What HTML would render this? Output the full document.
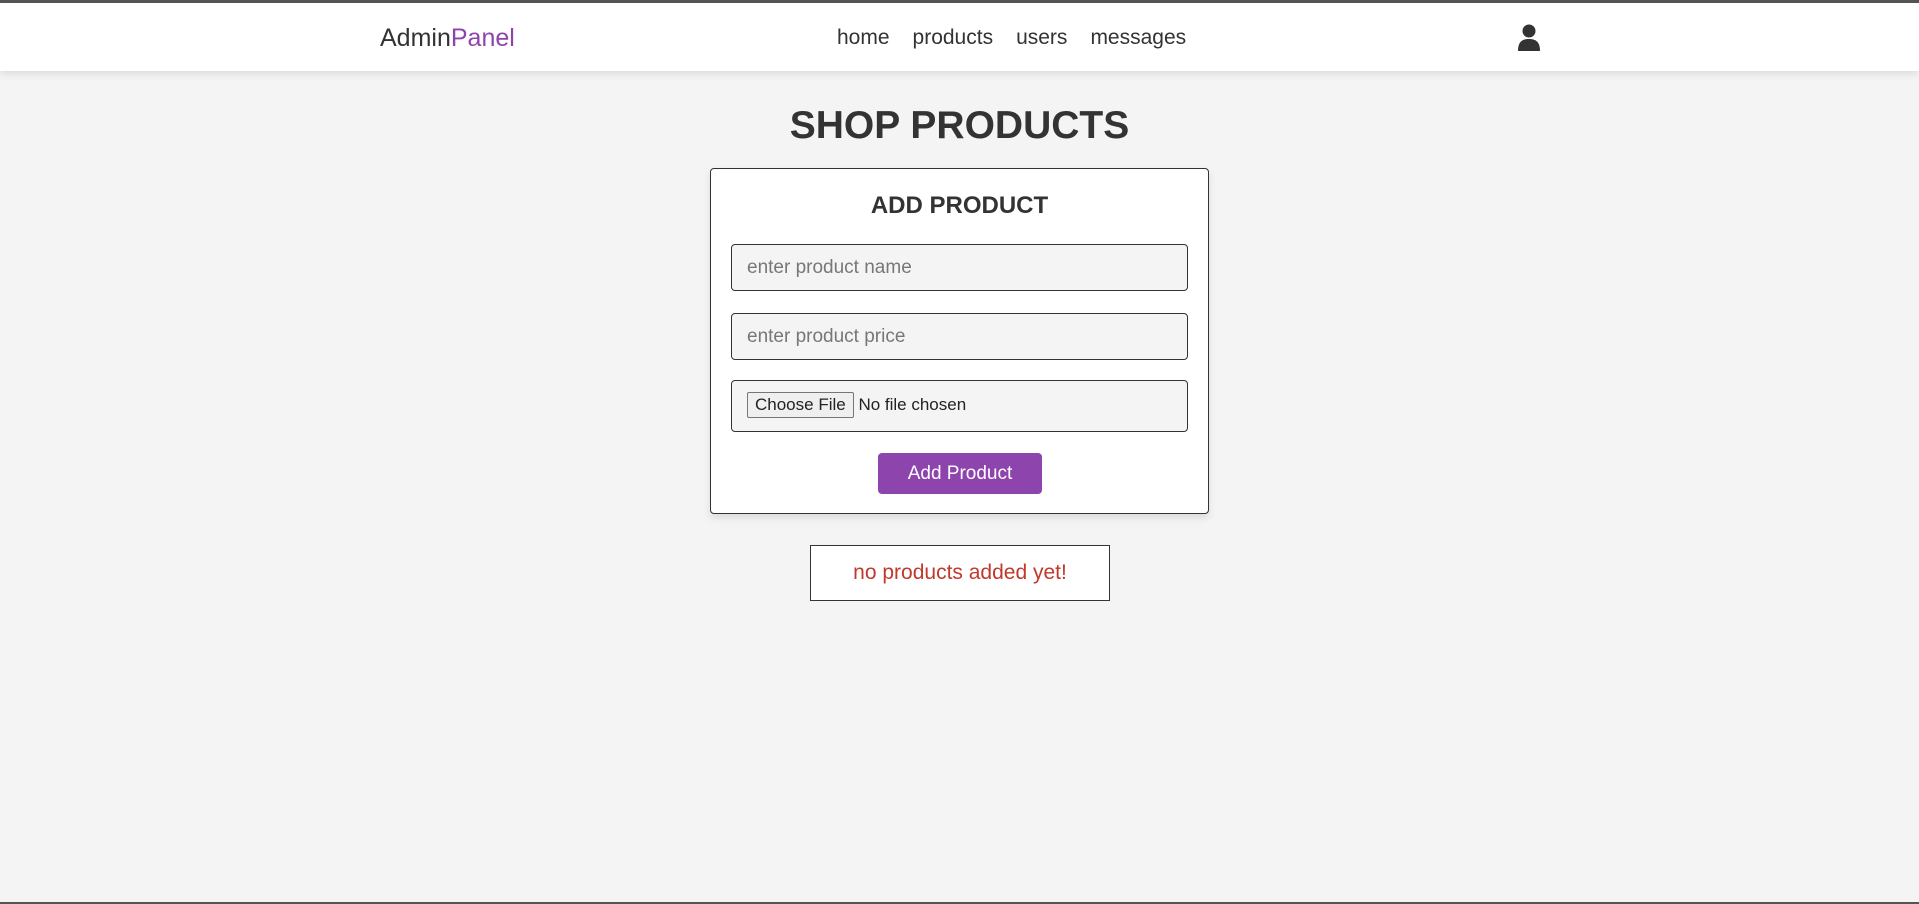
<!DOCTYPE html>
<html><head><meta charset="utf-8"><style>
*{margin:0;padding:0;box-sizing:border-box}
html,body{width:1919px;height:904px;overflow:hidden}
body{background:#f4f4f4;font-family:"Liberation Sans",sans-serif;color:#333;position:relative;border-top:3px solid #555;border-bottom:2px solid #555}
.hdr{position:absolute;top:0;left:0;width:1919px;height:68px;background:#fff;box-shadow:0 3px 8px rgba(0,0,0,.1)}
.logo{position:absolute;left:380px;top:21px;font-size:25px;color:#333}
.logo span{color:#8e44ad}
.nav{position:absolute;left:837px;top:23px;font-size:21px;color:#333}
.nav a{margin-right:23px}
.user{position:absolute;left:1518px;top:21px}
h1{position:absolute;left:0;width:1919px;top:101px;text-align:center;font-size:39px;font-weight:bold;color:#333}
.card{position:absolute;left:710px;top:165px;width:499px;height:346px;background:#fff;border:1px solid #333;border-radius:4px;box-shadow:0 4px 8px rgba(0,0,0,.1)}
.card h3{position:absolute;left:0;width:100%;top:23px;text-align:center;font-size:24px;font-weight:bold}
.in{position:absolute;left:20px;width:457px;background:#f4f4f4;border:1px solid #333;border-radius:4px;font-size:19px;color:#777;padding-left:15px}
.btn{position:absolute;left:167px;top:284px;width:164px;height:41px;background:#8e44ad;color:#fff;border-radius:4px;text-align:center;line-height:41px;font-size:19px}
.fb{display:inline-block;border:1px solid #767676;background:#efefef;color:#222;border-radius:2px;padding:2px 7px;font-size:17px}
.empty{position:absolute;left:810px;top:542px;width:300px;height:56px;background:#fff;border:1px solid #333;text-align:center;line-height:54px;font-size:21px;color:#c0392b}
</style></head><body>
<div class="hdr">
<div class="logo">Admin<span>Panel</span></div>
<div class="nav"><a>home</a><a>products</a><a>users</a><a>messages</a></div>
<svg class="user" width="22" height="27" viewBox="0 0 22 27"><circle cx="11" cy="7" r="6.5" fill="#333"/><path d="M0 27 C0 18 4 15 11 15 C18 15 22 18 22 27Z" fill="#333"/></svg>
</div>
<h1>SHOP PRODUCTS</h1>
<div class="card">
<h3>ADD PRODUCT</h3>
<div class="in" style="top:75px;height:47px;line-height:45px">enter product name</div>
<div class="in" style="top:144px;height:47px;line-height:45px">enter product price</div>
<div class="in" style="top:211px;height:52px;padding-top:11px;color:#222;font-size:17px"><span class="fb">Choose File</span> No file chosen</div>
<div class="btn">Add Product</div>
</div>
<div class="empty">no products added yet!</div>
</body></html>
